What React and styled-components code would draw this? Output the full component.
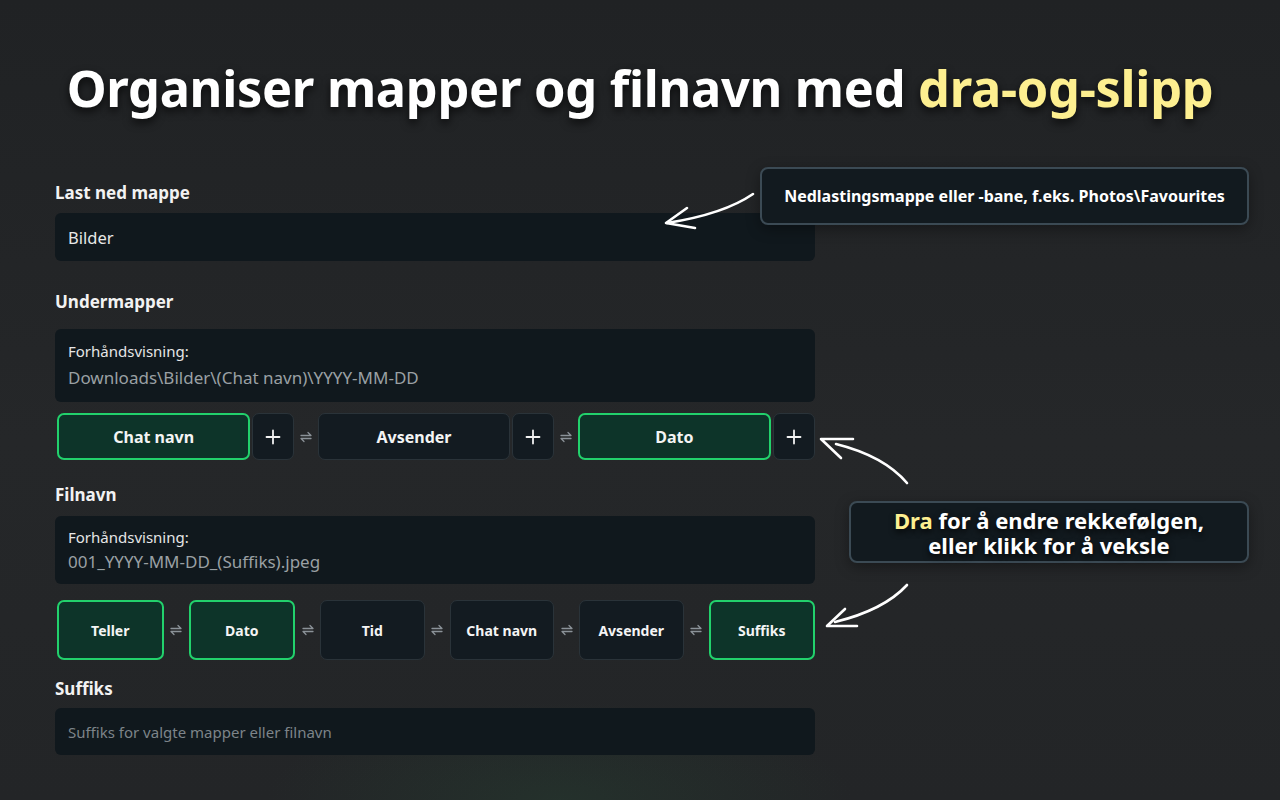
import React from "react";
import styled, { createGlobalStyle } from "styled-components";

const GlobalStyle = createGlobalStyle`
  html, body {
    margin: 0;
    padding: 0;
    background: #222427;
  }
  * {
    box-sizing: border-box;
  }
`;

const SwapIcon = () => (
  <svg width="12" height="14" viewBox="0 0 12 14" fill="none">
    <path d="M1 5.5 H11 L8 2.5" stroke="#8b9298" strokeWidth="1.3" strokeLinecap="round" strokeLinejoin="round" />
    <path d="M11 8.5 H1 L4 11.5" stroke="#8b9298" strokeWidth="1.3" strokeLinecap="round" strokeLinejoin="round" />
  </svg>
);

const PlusIcon = () => (
  <svg width="16" height="16" viewBox="0 0 16 16" fill="none">
    <path d="M8 1.5 V14.5 M1.5 8 H14.5" stroke="#f2f2f2" strokeWidth="1.8" strokeLinecap="round" />
  </svg>
);

const subfolders = [
  { label: "Chat navn", active: true },
  { label: "Avsender", active: false },
  { label: "Dato", active: true },
];

const fileParts = [
  { label: "Teller", active: true },
  { label: "Dato", active: true },
  { label: "Tid", active: false },
  { label: "Chat navn", active: false },
  { label: "Avsender", active: false },
  { label: "Suffiks", active: true },
];

const App = () => {
  return (
    <S.Stage>
      <GlobalStyle />
      <S.Title>
        Organiser mapper og filnavn med <S.Highlight>dra-og-slipp</S.Highlight>
      </S.Title>

      <S.Form>
        <S.Section $mt={63}>
          <S.Label $mb={10}>Last ned mappe</S.Label>
          <S.Input>Bilder</S.Input>
        </S.Section>

        <S.Section $mt={31}>
          <S.Label $mb={17}>Undermapper</S.Label>
          <S.Preview>
            <S.PreviewTitle>Forhåndsvisning:</S.PreviewTitle>
            <S.PreviewValue>Downloads\Bilder\(Chat navn)\YYYY-MM-DD</S.PreviewValue>
          </S.Preview>
          <S.ChipRow $mt={11} $h={47}>
            {subfolders.map((item, i) => (
              <React.Fragment key={item.label}>
                {i > 0 && (
                  <S.Swap>
                    <SwapIcon />
                  </S.Swap>
                )}
                <S.Chip $active={item.active}>{item.label}</S.Chip>
                <S.PlusButton>
                  <PlusIcon />
                </S.PlusButton>
              </React.Fragment>
            ))}
          </S.ChipRow>
        </S.Section>

        <S.Section $mt={25}>
          <S.Label $mb={11}>Filnavn</S.Label>
          <S.Preview $compact>
            <S.PreviewTitle>Forhåndsvisning:</S.PreviewTitle>
            <S.PreviewValue>001_YYYY-MM-DD_(Suffiks).jpeg</S.PreviewValue>
          </S.Preview>
          <S.ChipRow $mt={16} $h={60}>
            {fileParts.map((item, i) => (
              <React.Fragment key={item.label}>
                {i > 0 && (
                  <S.Swap $wide>
                    <SwapIcon />
                  </S.Swap>
                )}
                <S.Chip $active={item.active} $small>
                  {item.label}
                </S.Chip>
              </React.Fragment>
            ))}
          </S.ChipRow>
        </S.Section>

        <S.Section $mt={19}>
          <S.Label $mb={9}>Suffiks</S.Label>
          <S.Input $placeholder>Suffiks for valgte mapper eller filnavn</S.Input>
        </S.Section>
      </S.Form>

      <S.Callout $top={167} $left={760} $width={489} $height={58}>
        <S.CalloutSmall>Nedlastingsmappe eller -bane, f.eks. Photos\Favourites</S.CalloutSmall>
      </S.Callout>

      <S.Callout $top={501} $left={849} $width={400} $height={62}>
        <S.CalloutBig>
          <S.CalloutLine>
            <S.Highlight>Dra</S.Highlight> for å endre rekkefølgen,
          </S.CalloutLine>
          <S.CalloutLine>eller klikk for å veksle</S.CalloutLine>
        </S.CalloutBig>
      </S.Callout>

      <S.Arrows width="1280" height="800" viewBox="0 0 1280 800">
        <g stroke="#ffffff" strokeWidth="2.6" fill="none" strokeLinecap="round" strokeLinejoin="round">
          <path d="M753 194 Q724 214 667 223" />
          <path d="M687 208 L666 223 L695 228" />
          <path d="M907 483 Q884 456 836 444" />
          <path d="M853 439 L821 439 L841 458" />
          <path d="M907 585 Q884 610 835 622" />
          <path d="M845 609 L827 626 L857 626" />
        </g>
      </S.Arrows>
    </S.Stage>
  );
};

const S = {
  Stage: styled.div`
    position: relative;
    width: 1280px;
    height: 800px;
    overflow: hidden;
    padding-top: 56px;
    font-family: "Noto Sans", "Open Sans", sans-serif;
    color: #f4f4f4;
    background:
      radial-gradient(ellipse 420px 140px at 560px 800px, rgba(40, 90, 60, 0.22), transparent 70%),
      linear-gradient(180deg, #202224 0%, #252729 55%, #232527 100%);
  `,
  Title: styled.h1`
    margin: 0;
    text-align: center;
    font-size: 50.5px;
    line-height: 64px;
    font-weight: 700;
    letter-spacing: -0.3px;
    color: #ffffff;
    text-shadow: 0 4px 8px rgba(0, 0, 0, 0.7);
  `,
  Highlight: styled.span`
    color: #fdef90;
  `,
  Form: styled.div`
    width: 760px;
    margin-left: 55px;
    display: flex;
    flex-direction: column;
  `,
  Section: styled.div`
    display: flex;
    flex-direction: column;
    margin-top: ${(p) => p.$mt}px;
  `,
  Label: styled.div`
    font-size: 17px;
    line-height: 20px;
    font-weight: 700;
    color: #f2f2f2;
    margin-bottom: ${(p) => p.$mb}px;
  `,
  Input: styled.div`
    height: ${(p) => (p.$placeholder ? 47 : 48)}px;
    display: flex;
    align-items: center;
    padding: 0 13px;
    border-radius: 6px;
    background: #10181d;
    font-size: ${(p) => (p.$placeholder ? 15 : 16.5)}px;
    color: ${(p) => (p.$placeholder ? "#7d8489" : "#e8e8e8")};
  `,
  Preview: styled.div`
    display: flex;
    flex-direction: column;
    gap: ${(p) => (p.$compact ? 3 : 5)}px;
    padding: ${(p) => (p.$compact ? "12px 13px 10px" : "13px 13px 12px")};
    border-radius: 6px;
    background: #10181d;
  `,
  PreviewTitle: styled.div`
    font-size: 15px;
    line-height: 19px;
    color: #e6e6e6;
  `,
  PreviewValue: styled.div`
    font-size: 17px;
    line-height: 24px;
    color: #9aa0a4;
  `,
  ChipRow: styled.div`
    display: flex;
    align-items: stretch;
    height: ${(p) => p.$h}px;
    margin-top: ${(p) => p.$mt}px;
    padding-left: 2px;
  `,
  Chip: styled.div`
    flex: 1;
    display: flex;
    align-items: center;
    justify-content: center;
    border-radius: 7px;
    font-size: ${(p) => (p.$small ? 14 : 16)}px;
    font-weight: 700;
    color: #f4f4f4;
    background: ${(p) => (p.$active ? "#0d3429" : "#131b21")};
    border: ${(p) => (p.$active ? "2px solid #22d16c" : "1px solid #2a3339")};
  `,
  PlusButton: styled.div`
    width: 42px;
    margin-left: 2px;
    display: flex;
    align-items: center;
    justify-content: center;
    border-radius: 7px;
    background: #131b21;
    border: 1px solid #2a3339;
  `,
  Swap: styled.div`
    width: ${(p) => (p.$wide ? 25 : 24)}px;
    display: flex;
    align-items: center;
    justify-content: center;
  `,
  Callout: styled.div`
    position: absolute;
    top: ${(p) => p.$top}px;
    left: ${(p) => p.$left}px;
    width: ${(p) => p.$width}px;
    height: ${(p) => p.$height}px;
    display: flex;
    align-items: center;
    justify-content: center;
    text-align: center;
    background: #121a1f;
    border: 2px solid #3b4a54;
    border-radius: 8px;
    box-shadow: 0 4px 14px rgba(0, 0, 0, 0.35);
  `,
  CalloutSmall: styled.div`
    font-size: 16px;
    font-weight: 700;
    color: #ffffff;
  `,
  CalloutBig: styled.div`
    display: flex;
    flex-direction: column;
    align-items: center;
    gap: 1px;
    font-size: 22px;
    font-weight: 700;
    color: #ffffff;
    text-shadow: 0 3px 6px rgba(0, 0, 0, 0.8);
  `,
  CalloutLine: styled.div`
    line-height: 24px;
  `,
  Arrows: styled.svg`
    position: absolute;
    top: 0;
    left: 0;
    pointer-events: none;
  `,
};

export default App;
